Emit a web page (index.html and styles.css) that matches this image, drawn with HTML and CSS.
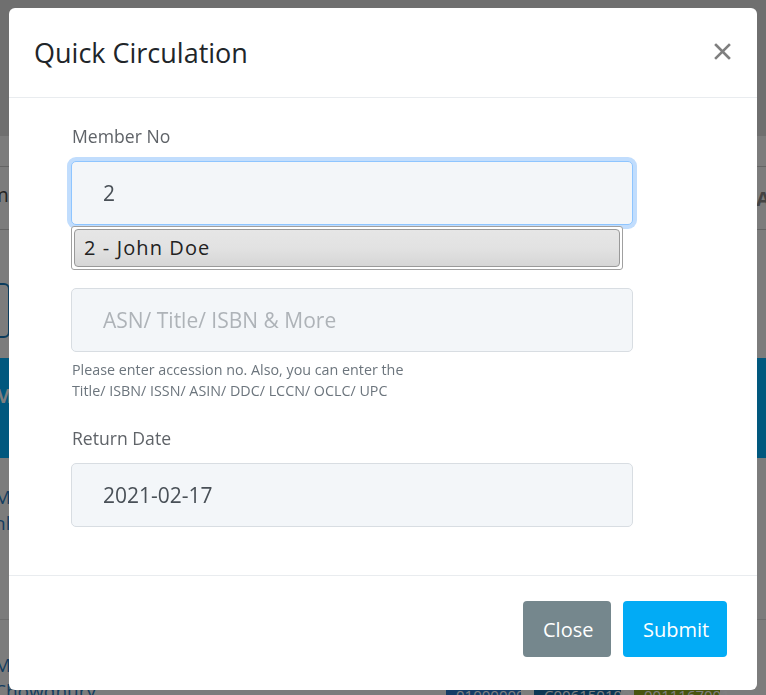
FILE: index.html
```html
<!DOCTYPE html>
<html lang="en">
<head>
<meta charset="utf-8">
<title>Quick Circulation</title>
<link rel="stylesheet" href="styles.css">
</head>
<body>
<div class="page">
  <div class="topbar"></div>
  <div class="table-head">
    <span class="th-left">Name</span>
    <span class="th-right">IA</span>
  </div>
  <div class="toolbar"><span class="tool-btn"></span></div>
  <div class="band"><span class="band-text">Mo</span></div>
  <div class="row"><a class="link">Mo<br>hh</a></div>
  <div class="row row-last">
    <a class="link">Mo<br>Chowdhury</a>
    <div class="badges">
      <span class="badge b1">01000000</span>
      <span class="badge b2">C006150100</span>
      <span class="badge b3">0011167001</span>
    </div>
  </div>
</div>
<div class="backdrop"></div>
<div class="modal-wrap">
  <div class="modal">
    <div class="modal-header">
      <h4 class="modal-title">Quick Circulation</h4>
      <span class="close" aria-label="Close">
        <svg width="17" height="17" viewBox="0 0 17 17"><path d="M2 2 L15 15 M15 2 L2 15" stroke="#7f7f7f" stroke-width="2.6" stroke-linecap="square"/></svg>
      </span>
    </div>
    <div class="modal-body">
      <label class="label">Member No</label>
      <div class="field-wrap">
        <input class="input input-focus" type="text" value="2">
        <div class="suggest"><div class="suggest-item">2 - John Doe</div></div>
      </div>
      <input class="input input-2" type="text" placeholder="ASN/ Title/ ISBN &amp; More">
      <p class="help">Please enter accession no. Also, you can enter the<br>Title/ ISBN/ ISSN/ ASIN/ DDC/ LCCN/ OCLC/ UPC</p>
      <label class="label label-2">Return Date</label>
      <input class="input" type="text" value="2021-02-17">
    </div>
    <div class="modal-footer">
      <button class="btn btn-close">Close</button>
      <button class="btn btn-submit">Submit</button>
    </div>
  </div>
</div>
</body>
</html>
```

FILE: styles.css
```css
html, body {
  margin: 0;
  padding: 0;
  height: 100%;
  overflow: hidden;
  font-family: "Open Sans", "Noto Sans", sans-serif;
}

.page {
  width: 766px;
  height: 695px;
  overflow: hidden;
  background: #f9f9f9;
  display: flex;
  flex-direction: column;
}

.page > * {
  flex-shrink: 0;
}

.topbar {
  height: 136px;
  background: #dedede;
}

.table-head {
  box-sizing: border-box;
  height: 64px;
  margin-top: 30px;
  border-top: 1px solid #c8c8c8;
  border-bottom: 1px solid #c8c8c8;
  display: flex;
  align-items: center;
  justify-content: space-between;
  font-size: 20px;
  color: #444;
}

.th-left { margin-left: -36px; margin-top: -8px; }
.th-right { margin-right: -4px; color: #888; font-weight: 700; }

.toolbar {
  height: 128px;
  display: flex;
  align-items: flex-start;
}

.tool-btn {
  display: block;
  width: 22px;
  height: 51px;
  margin-top: 53px;
  margin-left: -16px;
  border: 2px solid #1779ba;
  border-radius: 6px;
}

.band {
  height: 100px;
  background: #02b1fd;
  display: flex;
  align-items: flex-start;
}

.band-text {
  margin-top: 24px;
  margin-left: -6px;
  color: #fff;
  font-size: 20px;
  font-weight: 700;
}

.row {
  box-sizing: border-box;
  height: 162px;
  border-bottom: 1px solid #ddd;
  display: flex;
  align-items: flex-start;
}

.row-last {
  height: 75px;
  border-bottom: 0;
}

.link {
  margin-top: 26px;
  margin-left: -6px;
  color: #2a7bc0;
  font-size: 19px;
  line-height: 26px;
}

.row-last .link { margin-top: 32px; }

.badges {
  display: flex;
  gap: 13px;
  margin-top: 63px;
  margin-left: auto;
  margin-right: 46px;
}

.badge {
  display: block;
  padding: 2px 10px;
  font-size: 15px;
  color: #fff;
}

.b1 { background: #2a78cc; width: 55px; }
.b2 { background: #1a6da8; width: 67px; }
.b3 { background: #8ea81c; width: 66px; }

.backdrop {
  position: fixed;
  inset: 0;
  background: rgba(0, 0, 0, 0.5);
}

.modal-wrap {
  position: fixed;
  inset: 0;
  padding: 8px 9px;
}

.modal {
  width: 748px;
  background: #fff;
  border-radius: 6px;
  display: flex;
  flex-direction: column;
}

.modal-header {
  box-sizing: border-box;
  height: 90px;
  border-bottom: 1px solid #e9ecef;
  display: flex;
  align-items: center;
  justify-content: space-between;
  padding: 0 26px 0 25px;
}

.modal-title {
  margin: 0;
  font-size: 27px;
  font-weight: 400;
  color: #212529;
}

.close {
  display: flex;
  margin-top: -3px;
}

.modal-body {
  padding: 26px 124px 48px 62px;
  display: flex;
  flex-direction: column;
  align-items: flex-start;
}

.label {
  font-size: 17.6px;
  line-height: 24px;
  color: #5f6368;
  margin-left: 1px;
}

.field-wrap {
  position: relative;
  width: 562px;
  margin-top: 13px;
  margin-bottom: 63px;
}

.input {
  box-sizing: border-box;
  width: 562px;
  height: 64px;
  padding: 0 31px;
  border: 1px solid #d8dde2;
  border-radius: 5px;
  background: #f3f6f9;
  font-family: "Open Sans", sans-serif;
  font-size: 21px;
  color: #495057;
  outline: none;
}

.input-focus {
  border-color: #8ec5ff;
  box-shadow: 0 0 0 4px #c1ddfd;
}

.input-2 {
  margin: 0;
}

.input::placeholder {
  color: #aeb3b8;
}

.suggest {
  position: absolute;
  left: 0;
  top: 65px;
  box-sizing: border-box;
  width: 552px;
  height: 44px;
  padding: 2px;
  background: #fff;
  border: 1px solid #a0a0a0;
  border-radius: 3px;
}

.suggest-item {
  box-sizing: border-box;
  height: 38px;
  padding: 0 9px;
  border: 1px solid #999;
  border-radius: 4px;
  background: linear-gradient(#e6e6e6, #e2e2e2 50%, #d6d6d6);
  font-family: "Open Sans", "Noto Sans", sans-serif;
  font-size: 20px;
  letter-spacing: 1.1px;
  line-height: 36px;
  color: #222;
}

.help {
  margin: 7px 0 0 1px;
  font-size: 14.3px;
  line-height: 21px;
  color: #6c757d;
}

.label-2 {
  margin-top: 25px;
  margin-bottom: 13px;
}

.modal-footer {
  box-sizing: border-box;
  height: 115px;
  border-top: 1px solid #e9ecef;
  display: flex;
  justify-content: flex-end;
  align-items: flex-start;
  gap: 12px;
  padding: 25px 30px 0 0;
}

.btn {
  height: 56px;
  border: 0;
  border-radius: 4px;
  padding: 0 20px;
  font-family: "Open Sans", sans-serif;
  font-size: 20px;
  color: #fff;
}

.btn-close {
  width: 88px;
  background: #75878d;
}

.btn-submit {
  width: 104px;
  background: #02abf5;
}
```
